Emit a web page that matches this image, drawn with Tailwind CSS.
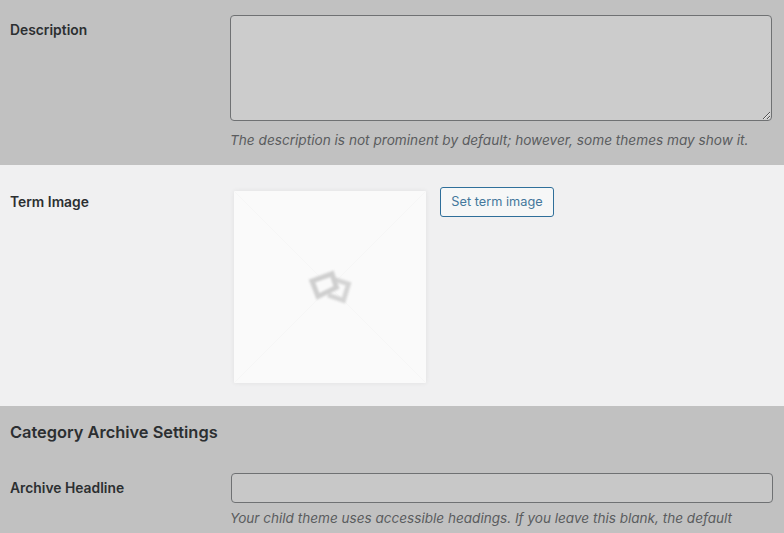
<!DOCTYPE html>
<html>
<head>
<script src="https://cdn.jsdelivr.net/npm/@tailwindcss/browser@4"></script>
</head>
<body class="overflow-hidden">
<main class="w-[784px] h-[533px] overflow-hidden bg-[#c1c1c1] font-['Inter',sans-serif] text-[#1d2327] text-[13px]">
  <section class="h-[165px] flex pl-[10px] pt-[15px]">
    <label class="w-[220px] shrink-0 pt-[6px] font-semibold text-[13.85px] leading-[19px] text-[#2c2f31]">Description</label>
    <div class="w-[542px]">
      <textarea class="block w-[542px] h-[106px] bg-[#cccccc] border border-[#6f7173] rounded-[4px]"></textarea>
      <p class="mt-[10px] italic text-[13.63px] leading-[19px] text-[#5a5c5e] whitespace-nowrap">The description is not prominent by default; however, some themes may show it.</p>
    </div>
  </section>
  <section class="h-[241px] bg-[#f0f0f1] flex pl-[10px] pt-[22px]">
    <label class="w-[224px] shrink-0 pt-[6px] font-semibold text-[13.85px] leading-[19px] text-[#2c2f31]">Term Image</label>
    <div class="flex items-start">
      <div class="w-[192px] h-[192px] mt-[4px] bg-[#fafafa] shadow-[0_0_5px_rgba(0,0,0,0.07)] flex items-center justify-center relative">
        <svg class="absolute inset-0" width="192" height="192" viewBox="0 0 192 192">
          <path d="M0 0L192 192M192 0L0 192" stroke="#f6f6f6" stroke-width="1"/>
        </svg>
        <svg class="relative blur-[0.8px]" width="44" height="34" viewBox="0 0 44 34" fill="none">
          <path d="M27 9.5L40.5 14L35.5 30.5L20 25" stroke="#d4d4d4" stroke-width="4.8"/>
          <path d="M4 11L24 3.8L28.4 17.4L10 26.4Z" fill="#fafafa" stroke="#cfcfcf" stroke-width="5"/>
        </svg>
      </div>
      <button class="ml-[14px] h-[30px] w-[114px] border border-[#2f6f9a] rounded-[3px] bg-[#f6f7f7] text-[#44789c] text-[12.75px] leading-[28px] text-center whitespace-nowrap">Set term image</button>
    </div>
  </section>
  <section class="pl-[10px]">
    <h2 class="pt-[16px] text-[16.4px] font-semibold leading-[21px] text-[#2c2f31]">Category Archive Settings</h2>
    <div class="flex mt-[30px]">
      <label class="w-[221px] shrink-0 pt-[6px] font-semibold text-[13.85px] leading-[19px] text-[#2c2f31]">Archive Headline</label>
      <div class="w-[542px]">
        <input class="block w-[542px] h-[30px] bg-[#c8c8c8] border border-[#6f7173] rounded-[4px]" type="text">
        <p class="-ml-[1px] mt-[6px] italic text-[13.57px] leading-[19px] text-[#5a5c5e] whitespace-nowrap">Your child theme uses accessible headings. If you leave this blank, the default</p>
      </div>
    </div>
  </section>
</main>
</body>
</html>
